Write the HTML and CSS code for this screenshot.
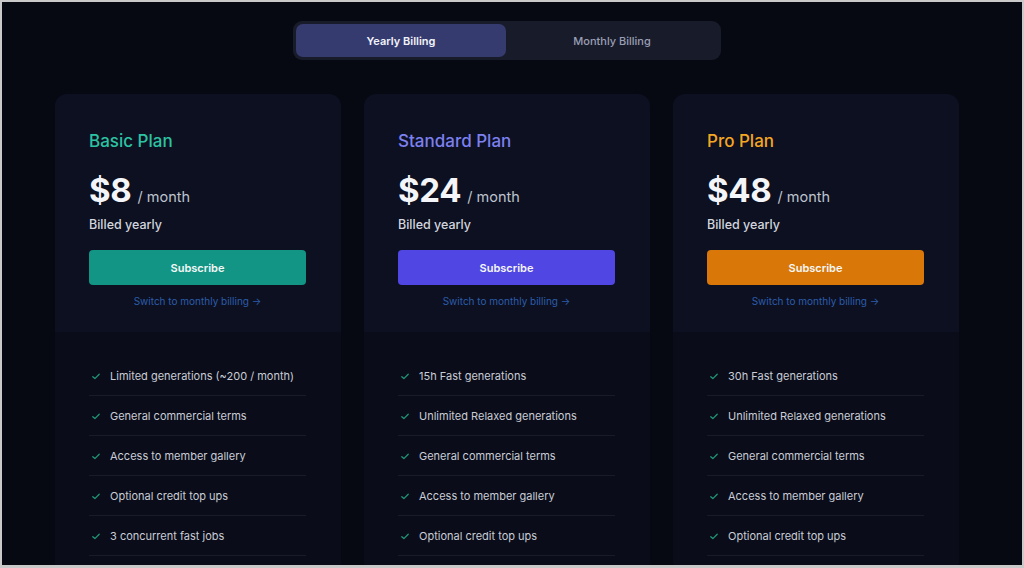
FILE: index.html
```html
<!DOCTYPE html>
<html lang="en">
<head>
<meta charset="utf-8">
<title>Pricing</title>
<link rel="stylesheet" href="styles.css">
</head>
<body>
<div class="frame">
  <main class="page">
    <div class="toggle">
      <button class="toggle-btn active">Yearly Billing</button>
      <button class="toggle-btn">Monthly Billing</button>
    </div>
    <div class="cards">
      <section class="card">
        <div class="card-head">
          <h2 class="plan plan-basic">Basic Plan</h2>
          <div class="price"><span class="amount">$8</span><span class="per">/ month</span></div>
          <div class="billed">Billed yearly</div>
          <button class="subscribe sub-basic">Subscribe</button>
          <a class="switch" href="#">Switch to monthly billing →</a>
        </div>
        <ul class="features">
          <li><svg class="check" viewBox="0 0 10 8"><path d="M1 4.2 3.6 6.6 9 1.2"/></svg>Limited generations (~200 / month)</li>
          <li><svg class="check" viewBox="0 0 10 8"><path d="M1 4.2 3.6 6.6 9 1.2"/></svg>General commercial terms</li>
          <li><svg class="check" viewBox="0 0 10 8"><path d="M1 4.2 3.6 6.6 9 1.2"/></svg>Access to member gallery</li>
          <li><svg class="check" viewBox="0 0 10 8"><path d="M1 4.2 3.6 6.6 9 1.2"/></svg>Optional credit top ups</li>
          <li><svg class="check" viewBox="0 0 10 8"><path d="M1 4.2 3.6 6.6 9 1.2"/></svg>3 concurrent fast jobs</li>
        </ul>
      </section>
      <section class="card">
        <div class="card-head">
          <h2 class="plan plan-standard">Standard Plan</h2>
          <div class="price"><span class="amount">$24</span><span class="per">/ month</span></div>
          <div class="billed">Billed yearly</div>
          <button class="subscribe sub-standard">Subscribe</button>
          <a class="switch" href="#">Switch to monthly billing →</a>
        </div>
        <ul class="features">
          <li><svg class="check" viewBox="0 0 10 8"><path d="M1 4.2 3.6 6.6 9 1.2"/></svg>15h Fast generations</li>
          <li><svg class="check" viewBox="0 0 10 8"><path d="M1 4.2 3.6 6.6 9 1.2"/></svg>Unlimited Relaxed generations</li>
          <li><svg class="check" viewBox="0 0 10 8"><path d="M1 4.2 3.6 6.6 9 1.2"/></svg>General commercial terms</li>
          <li><svg class="check" viewBox="0 0 10 8"><path d="M1 4.2 3.6 6.6 9 1.2"/></svg>Access to member gallery</li>
          <li><svg class="check" viewBox="0 0 10 8"><path d="M1 4.2 3.6 6.6 9 1.2"/></svg>Optional credit top ups</li>
        </ul>
      </section>
      <section class="card">
        <div class="card-head">
          <h2 class="plan plan-pro">Pro Plan</h2>
          <div class="price"><span class="amount">$48</span><span class="per">/ month</span></div>
          <div class="billed">Billed yearly</div>
          <button class="subscribe sub-pro">Subscribe</button>
          <a class="switch" href="#">Switch to monthly billing →</a>
        </div>
        <ul class="features">
          <li><svg class="check" viewBox="0 0 10 8"><path d="M1 4.2 3.6 6.6 9 1.2"/></svg>30h Fast generations</li>
          <li><svg class="check" viewBox="0 0 10 8"><path d="M1 4.2 3.6 6.6 9 1.2"/></svg>Unlimited Relaxed generations</li>
          <li><svg class="check" viewBox="0 0 10 8"><path d="M1 4.2 3.6 6.6 9 1.2"/></svg>General commercial terms</li>
          <li><svg class="check" viewBox="0 0 10 8"><path d="M1 4.2 3.6 6.6 9 1.2"/></svg>Access to member gallery</li>
          <li><svg class="check" viewBox="0 0 10 8"><path d="M1 4.2 3.6 6.6 9 1.2"/></svg>Optional credit top ups</li>
        </ul>
      </section>
    </div>
  </main>
</div>
</body>
</html>
```
FILE: styles.css
```css
* { box-sizing: border-box; }
html, body { margin: 0; padding: 0; }
body {
  background: #c9c9c9;
  font-family: Inter, "DejaVu Sans", sans-serif;
}
.frame {
  width: 1024px;
  height: 568px;
  border: 2px solid #c9c9c9;
  border-bottom-width: 3px;
  background: #070912;
  overflow: hidden;
}
.page {
  padding: 19px 10px 0 0;
  display: flex;
  flex-direction: column;
  align-items: center;
}
.toggle {
  width: 428px;
  height: 39px;
  padding: 3px;
  background: #181b2a;
  border-radius: 9px;
  display: flex;
}
.toggle-btn {
  flex: 1;
  border: 0;
  background: transparent;
  color: #9a9fb4;
  font-family: inherit;
  font-size: 11px;
  font-weight: 500;
  border-radius: 7px;
  padding: 0;
}
.toggle-btn.active {
  flex: 0 0 210px;
  background: #363b6f;
  color: #f2f3fa;
  font-weight: 600;
}
.cards {
  margin-top: 34px;
  display: grid;
  grid-template-columns: repeat(3, 286px);
  gap: 23px;
}
.card {
  background: #0a0d19;
  border-radius: 12px;
  overflow: hidden;
  height: 480px;
}
.card-head {
  background: #0c1020;
  padding: 35px 35px 24px 34px;
  display: flex;
  flex-direction: column;
}
.plan {
  margin: 0;
  font-size: 17px;
  line-height: 24px;
  font-weight: 500;
}
.plan-basic { color: #2cc3a3; }
.plan-standard { color: #7d80f0; }
.plan-pro { color: #f5a623; }
.price {
  margin-top: 17px;
  height: 40px;
  display: flex;
  align-items: baseline;
  gap: 6px;
}
.amount {
  font-size: 33px;
  line-height: 40px;
  font-weight: 700;
  color: #f4f5f9;
  letter-spacing: -0.3px;
}
.per {
  font-size: 14.5px;
  color: #bfc3cf;
}
.billed {
  margin-top: 6px;
  font-size: 12.5px;
  line-height: 18px;
  font-weight: 500;
  color: #d3d6df;
}
.subscribe {
  margin-top: 16px;
  height: 35px;
  border: 0;
  border-radius: 4px;
  color: #f5f7f7;
  font-family: inherit;
  font-size: 11px;
  font-weight: 600;
}
.sub-basic { background: #129584; }
.sub-standard { background: #5046e3; }
.sub-pro { background: #d97708; }
.switch {
  margin-top: 9px;
  text-align: center;
  font-size: 10px;
  line-height: 14px;
  color: #2d5dab;
  text-decoration: none;
}
.features {
  list-style: none;
  margin: 0;
  padding: 24px 35px 0 34px;
}
.features li {
  height: 40px;
  display: flex;
  align-items: center;
  border-bottom: 1px solid #171b2a;
  font-size: 11px;
  color: #c9ccd6;
}
.check {
  width: 8px;
  height: 7px;
  margin: 1px 10px 0 3px;
  fill: none;
  stroke: #1f9575;
  stroke-width: 1.6;
  stroke-linecap: round;
  stroke-linejoin: round;
}
```
